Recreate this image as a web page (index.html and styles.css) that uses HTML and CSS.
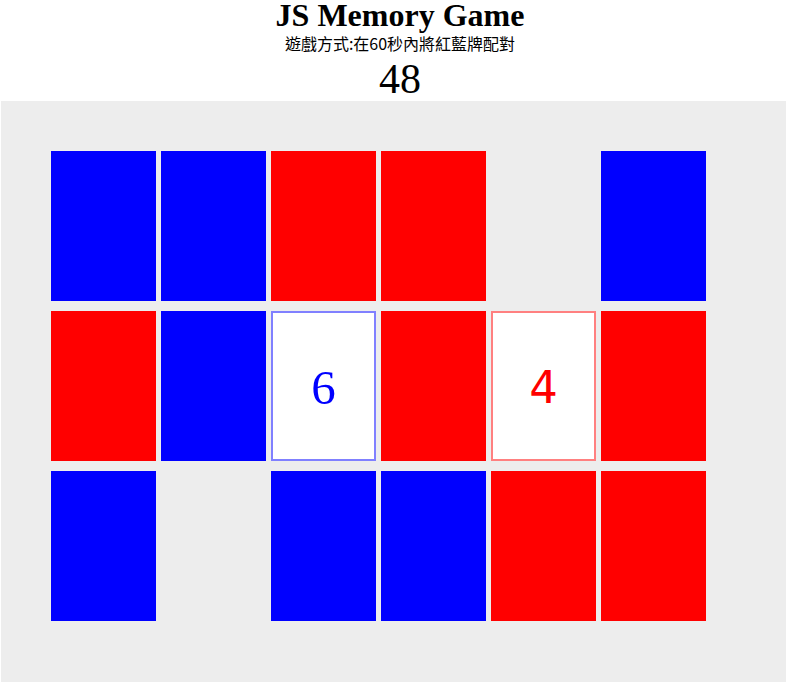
FILE: index.html
```html
<!DOCTYPE html>
<html lang="zh-Hant">
<head>
    <meta charset="UTF-8">
    <meta name="viewport" content="width=device-width, initial-scale=1.0">
    <title>JS Memory Game</title>
    <link rel="stylesheet" href="styles.css">
</head>
<body>
    <header class="top">
        <h1>JS Memory Game</h1>
        <p class="rule">遊戲方式:在60秒內將紅藍牌配對</p>
        <div class="timer">48</div>
    </header>

    <main class="board">
        <div class="grid">
            <div class="card blue"></div>
            <div class="card blue"></div>
            <div class="card red"></div>
            <div class="card red"></div>
            <div class="card done"></div>
            <div class="card blue"></div>

            <div class="card red"></div>
            <div class="card blue"></div>
            <div class="card open open-blue">6</div>
            <div class="card red"></div>
            <div class="card open open-red">4</div>
            <div class="card red"></div>

            <div class="card blue"></div>
            <div class="card done"></div>
            <div class="card blue"></div>
            <div class="card blue"></div>
            <div class="card red"></div>
            <div class="card red"></div>
        </div>
    </main>
</body>
</html>
```

FILE: styles.css
```css
body {
    margin: 0;
    font-family: "Liberation Serif", "Times New Roman", serif;
    color: #000;
    background-color: #fff;
    overflow: hidden;
}
.top {
    text-align: center;
    padding-left: 14px;
}
.top h1 {
    margin: 0;
    font-size: 32px;
    line-height: 30px;
    font-weight: bold;
}
.rule {
    margin: 0;
    font-family: "Noto Sans CJK TC", "Noto Sans", sans-serif;
    font-size: 16px;
    line-height: 27px;
}
.timer {
    font-size: 42px;
    line-height: 44px;
}
.board {
    margin-left: 1px;
    background-color: #ededed;
    padding: 50px 50px 80px;
}
.grid {
    display: grid;
    grid-template-columns: repeat(6, 105px);
    grid-auto-rows: 150px;
    column-gap: 5px;
    row-gap: 10px;
}
.card {
    box-sizing: border-box;
}
.card.blue {
    background-color: #0000ff;
}
.card.red {
    background-color: #ff0000;
}
.card.done {
    background-color: transparent;
}
.card.open {
    background-color: #fff;
    display: flex;
    align-items: center;
    justify-content: center;
    padding-top: 2px;
}
.open-blue {
    border: 2px solid #8080ff;
    color: #0000ff;
    font-family: "Liberation Serif", "Times New Roman", serif;
    font-size: 49px;
}
.open-red {
    border: 2px solid #ff8080;
    color: #ff0000;
    font-family: "DejaVu Sans", sans-serif;
    font-size: 45px;
}
```
